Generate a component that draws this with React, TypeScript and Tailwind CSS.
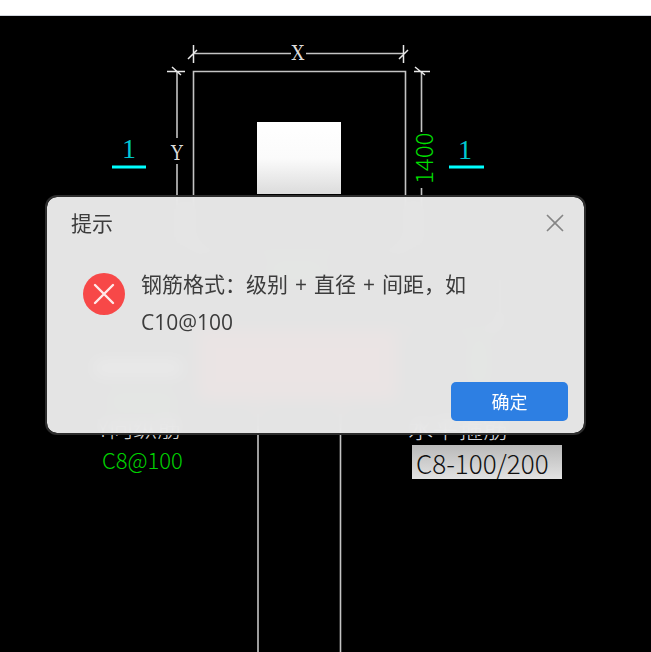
import { useState } from "react";
import type { ReactNode } from "react";

const cadFont = "font-['Noto_Sans_CJK_SC',sans-serif] font-light";
const uiFont = "font-['Open_Sans','Noto_Sans_CJK_SC',sans-serif]";

// three-per-em space, keeps the plus signs clear of the Chinese text
const GAP = "\u2004";
const MESSAGE = `钢筋格式：级别${GAP}+${GAP}直径${GAP}+${GAP}间距，如 C10@100`;

/** Footing plan: outline, column, dimension lines. Drawn in canvas units, 1 unit = 1px. */
function FootingDrawing() {
  return (
    <svg className={`absolute inset-0 h-full w-full ${cadFont}`}>
      <defs>
        <linearGradient id="column" x1="0" y1="0" x2="0" y2="1">
          <stop offset="0" stopColor="#fff" />
          <stop offset="0.5" stopColor="#fbfbfb" />
          <stop offset="1" stopColor="#dcdcdc" />
        </linearGradient>
      </defs>
      <rect x="257" y="106" width="84" height="72" fill="url(#column)" />
      <rect x="198" y="316" width="199" height="68" fill="#700000" />
      <g fill="#004800">
        <rect x="270" y="248" width="54" height="14" />
        <rect x="110" y="378" width="64" height="14" />
        <rect x="472" y="324" width="14" height="44" />
      </g>
      <g fill="#6a6a6a">
        <rect x="94" y="344" width="88" height="16" />
      </g>
      <g fill="none" stroke="#c4c4c4" strokeWidth="1.6">
        <path d="M193.5 235V55.5H405.5V235Z" />
        <path d="M193 37.5H291M306 37.5H404" />
        <path d="M177 56V122M177 148V235" />
        <path d="M421.5 56V116M421.5 172V235" />
        <path d="M85 314H500V250M258 384V652M340.5 384V652" />
      </g>
      <g fill="none" stroke="#e8e8e8" strokeWidth="1.5">
        <path d="M193.5 29V47M188 43L197 34" />
        <path d="M403.5 29V47M399 43L408 34" />
        <path d="M167 55.5H185M172 51L181 59" />
        <path d="M414 55.5H430M415 51L425 59" />
      </g>
      <path d="M112 151H146M449 151H484" stroke="#00ffff" strokeWidth="3" />

      <g className="font-['DejaVu_Serif_Condensed','DejaVu_Serif',serif] text-[20px]" fill="#dcdcdc" textAnchor="middle">
        <text x="298" y="44">X</text>
        <text x="177" y="144">Y</text>
      </g>
      <g className="font-['Liberation_Serif',serif] text-[28px]" fill="#00c8d0" textAnchor="middle">
        <text x="129" y="142">1</text>
        <text x="465" y="143">1</text>
      </g>
      <text transform="translate(433 168) rotate(-90)" className="text-[24px]" fill="#00e000">
        1400
      </text>
      <text x="97" y="421" className="text-[24px]" fill="#d0d0d0">Y向纵筋</text>
      <text x="102" y="453" className="text-[22px]" fill="#00d000">C8@100</text>
    </svg>
  );
}

function StirrupField() {
  return (
    <div className={`absolute left-[408px] top-[399px] flex flex-col gap-1.5 ${cadFont}`}>
      <label htmlFor="stirrup" className="text-[25px] leading-6 text-gray-300">
        水平箍筋
      </label>
      <input
        id="stirrup"
        defaultValue="C8-100/200"
        className="ml-1 h-[34px] w-[150px] bg-linear-to-b from-[#b9b9b9] to-[#e2e2e2] px-1 text-[26px] text-[#111] outline-none"
      />
    </div>
  );
}

type MessageDialogProps = {
  title: string;
  children: ReactNode;
  onClose: () => void;
};

function MessageDialog({ title, children, onClose }: MessageDialogProps) {
  return (
    <section
      role="alertdialog"
      aria-labelledby="dialog-title"
      aria-describedby="dialog-message"
      className={`w-full max-w-[541px] rounded-xl border-2 border-[#2d2d2d] bg-[#f2f2f2]/94 bg-clip-padding text-[#3c3c3c] backdrop-blur-sm ${uiFont}`}
    >
      <header className="flex items-center justify-between pl-6 pr-4 pt-2">
        <h1 id="dialog-title" className="text-[21px] leading-9">
          {title}
        </h1>
        <button type="button" aria-label="关闭" onClick={onClose} className="p-1">
          <svg viewBox="0 0 18 18" className="size-[18px]" stroke="#858585" strokeWidth="1.6">
            <path d="M1 1L17 17M17 1L1 17" />
          </svg>
        </button>
      </header>
      <div className="flex gap-4 px-9 pt-6">
        <svg viewBox="0 0 42 42" className="mt-2 size-[42px] shrink-0" aria-hidden>
          <circle cx="21" cy="21" r="21" fill="#f74848" />
          <path d="M12 12L30 30M30 12L12 30" stroke="#ffe9e9" strokeWidth="2.4" strokeLinecap="round" />
        </svg>
        <p id="dialog-message" className="max-w-[350px] text-[21px] leading-[38px]">
          {children}
        </p>
      </div>
      <footer className="flex justify-end px-4 pb-3 pt-[41px]">
        <button
          type="button"
          onClick={onClose}
          className="h-[39px] w-[117px] rounded-[5px] bg-[#2d7fe3] text-lg text-white"
        >
          确定
        </button>
      </footer>
    </section>
  );
}

export default function App() {
  const [open, setOpen] = useState(true);

  return (
    <div className="flex min-h-screen flex-col bg-white">
      <div className="h-4 border-b border-gray-300" />
      <main className="relative flex-1 overflow-hidden bg-black">
        <FootingDrawing />
        <StirrupField />
        {open && (
          <div className="absolute inset-0 flex items-start justify-center pr-5 pt-[179px]">
            <MessageDialog title="提示" onClose={() => setOpen(false)}>
              {MESSAGE}
            </MessageDialog>
          </div>
        )}
      </main>
    </div>
  );
}
